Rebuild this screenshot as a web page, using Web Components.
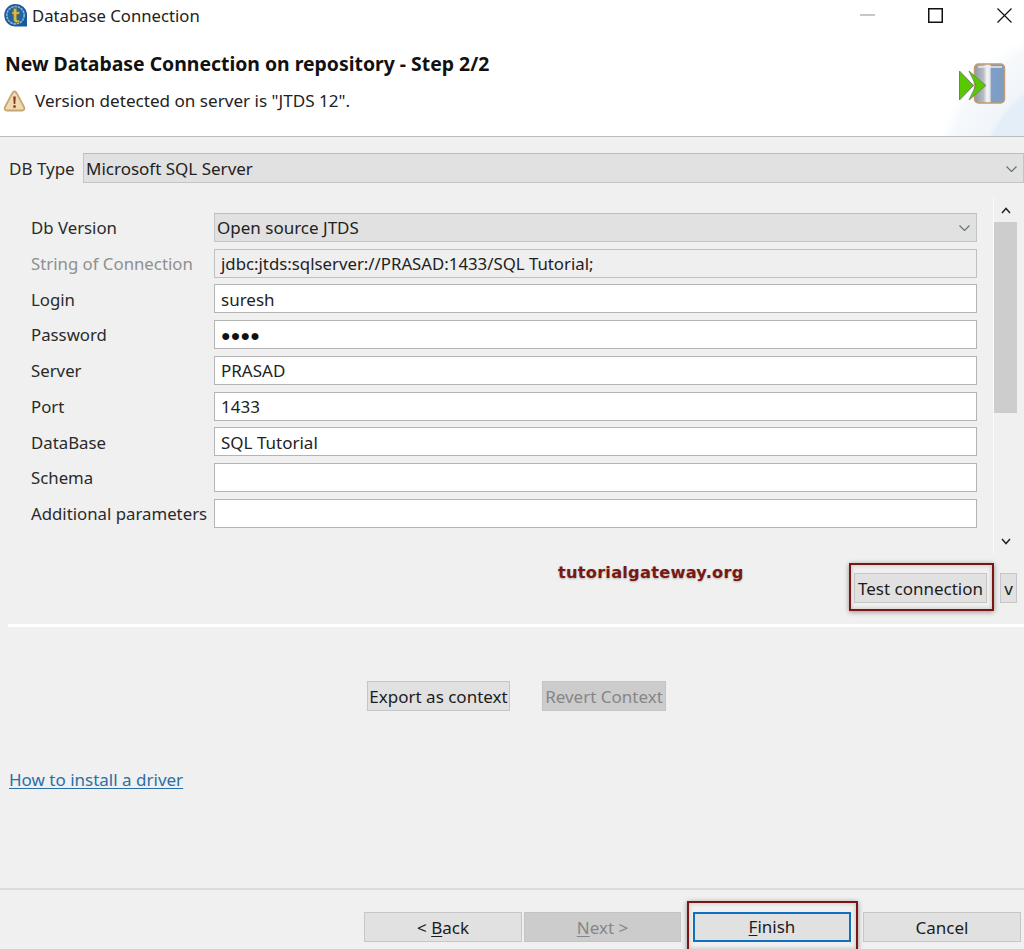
<!DOCTYPE html>
<html lang="en"><head><meta charset="utf-8"><title>Database Connection</title>
<style>
html,body{margin:0;padding:0;background:#f0f0f0}
body{font:17px/1.2 "Noto Sans","Open Sans",sans-serif;color:#1a1a1a;width:1024px;height:949px;overflow:hidden}
</style></head><body>
<x-dialog></x-dialog>
<script>
function el(name, css, html){
  customElements.define(name, class extends HTMLElement{
    constructor(){super();this.attachShadow({mode:'open'}).innerHTML='<style>'+css+'</style>'+html;}
  });
}
el('x-titlebar',`
:host{display:flex;align-items:center;height:32px;background:#fff;padding-left:4px;box-sizing:border-box;font-size:16.7px;color:#222}
svg{display:block}
.t{margin-left:4px;flex:1}
.c{display:flex;align-items:center}
.b{width:15px;height:24px;display:flex;align-items:center;justify-content:center;margin-top:-2px}
`,`<svg width="24" height="25" viewBox="0 0 24 25" style="margin-top:-2px"><path d="M11.500 1a11 11 0 1 0 0 22.500H23V12A11.200 11.200 0 0 0 11.500 1z" fill="#1a5a9c"/><circle cx="11.500" cy="12.200" r="8.700" fill="#1f659f" stroke="#8fb7d8" stroke-width="1.600" stroke-dasharray="2.500 .8"/><path d="M9.500 5.500h3.200v3.300h2.800v2.400h-2.800v5c0 1 .9 1.100 2.600.9v2.300c-3.500.6-5.800-.2-5.800-2.900v-5.300H8V8.800h1.500z" fill="#d9b94a" stroke="#7d6a25" stroke-width=".5"/></svg>
<span class="t">Database Connection</span>
<div class="c">
<div class="b" style="margin-right:53px"><svg width="15" height="2"><rect width="15" height="2" fill="#c8c8c8"/></svg></div>
<div class="b" style="margin-right:54px"><svg width="15" height="15"><rect x=".75" y=".75" width="13.500" height="13.500" fill="none" stroke="#111" stroke-width="1.500"/></svg></div>
<div class="b" style="margin-right:12px"><svg width="15" height="15"><path d="M.5.5l14 14M14.500.5l-14 14" stroke="#111" stroke-width="1.200" fill="none"/></svg></div>
</div>`);

el('x-banner',`
:host{display:block;position:relative;height:105px;box-sizing:border-box;border-bottom:1px solid #bdbdbd;background:radial-gradient(circle 156px at 1090px 148px,#e2ecf7 0,#e4eef8 68%,#f0f5fa 71%,#f6f9fc 92%,#fff 100%),#fff;padding-left:5px}
h1{margin:0;padding-top:19px;font-size:19.4px;line-height:26px;font-weight:700;color:#111}
.m{display:flex;align-items:center;margin-top:12px;font-size:17.100px;color:#222;margin-left:-2px}
.m span{margin-left:9px;padding-top:1px}
.i{position:absolute;left:958px;top:30px}
`,`<h1>New Database Connection on repository - Step 2/2</h1>
<div class="m"><svg width="23" height="24" viewBox="0 0 23 24"><path d="M11.500 2.500c-1 0-1.700.8-2.300 1.900L2 18c-1 2 0 3.500 2 3.500h15c2 0 3-1.500 2-3.500L13.800 4.400c-.6-1.100-1.300-1.900-2.300-1.900z" fill="#eedbb0" stroke="#c8a672" stroke-width="1.800"/><path d="M10.200 7.500h2.600l-.5 7.500h-1.600zM10.300 16.300h2.400v2.400h-2.400z" fill="#8c3a22"/></svg><span>Version detected on server is "JTDS 12".</span></div>
<svg class="i" width="48" height="44" viewBox="0 0 48 44"><defs><linearGradient id="g" x1="0" x2="1"><stop offset="0" stop-color="#8f979f"/><stop offset=".3" stop-color="#b8bdc2"/><stop offset=".42" stop-color="#f6f6f6"/><stop offset=".52" stop-color="#dfe3e7"/><stop offset=".56" stop-color="#7f9fc6"/><stop offset="1" stop-color="#7d9cc2"/></linearGradient></defs><rect x="16.500" y="2" width="30" height="39" rx="4" fill="url(#g)" stroke="#c09a70" stroke-width="1.500"/><path d="M20 5h24" stroke="#e6edf4" stroke-width="1.500"/><path d="M1.500 9l14 14.500L1.500 38z" fill="#58c800" stroke="#6f7f68"/><path d="M11 9l17 14.500L11 38l7-14.500z" fill="#58c800" stroke="#6f7f68" stroke-width=".8"/></svg>`);

el('x-combo',`
:host{display:flex;align-items:center;box-sizing:border-box;background:#e1e1e1;border:1px solid #c4c4c4;border-top-color:#bcbcbc;padding:2px 6px 0 2px;color:#222;height:100%}
span{flex:1}
`,`<span><slot></slot></span><svg width="11" height="6" viewBox="0 0 11 6"><path d="M.5.5l5 5 5-5" fill="none" stroke="#5f6f6f" stroke-width="1.100"/></svg>`);

el('x-input',`
:host{display:flex;align-items:center;box-sizing:border-box;background:#fff;border:1px solid #b4b4b4;padding:2px 6px 0;color:#222;height:100%;min-width:0}
:host([disabled]){background:#efefef;border-color:#c0c0c0;font-size:16.800px}
:host([secret]){font-size:16.200px;color:#111}
`,`<slot></slot>`);

el('x-row',`
:host{display:grid;grid-template-columns:183px 1fr;align-items:center;height:29px}
.l{white-space:nowrap;color:#2a2a2a;padding-top:2px;font-size:16.800px}
:host([disabled]) .l{color:#8f8f8f}
`,`<span class="l"><slot name="label"></slot></span><slot></slot>`);

el('x-scrollbar',`
:host{display:flex;flex-direction:column;width:24px;background:#f0f0f0;border-left:1px solid #fafafa;box-sizing:border-box}
.a{height:24px;display:flex;align-items:center;justify-content:center}
.tr{flex:1;display:flex;flex-direction:column}
.th{height:191px;background:#cdcdcd}
`,`<div class="a"><svg width="10" height="7" viewBox="0 0 10 7"><path d="M1 6l4-4.500L9 6" fill="none" stroke="#223" stroke-width="1.500"/></svg></div>
<div class="tr"><div class="th"></div></div>
<div class="a"><svg width="10" height="7" viewBox="0 0 10 7"><path d="M1 1l4 4.500L9 1" fill="none" stroke="#223" stroke-width="1.500"/></svg></div>`);

el('x-btn',`
:host{display:inline-flex;align-items:center;justify-content:center;box-sizing:border-box;background:#e1e1e1;border:1px solid #c6c6c6;padding-top:2px;height:30px;color:#1c1c1c;white-space:nowrap;position:relative}
:host([disabled]){background:#cccccc;border-color:#c4c4c4;color:#868686}
:host([focus]){border:2px solid #0f70c0;padding-top:1px}
`,`<slot></slot>`);

el('x-mark',`
:host{display:inline-flex;position:relative}
:host::after{content:"";position:absolute;pointer-events:none;inset:var(--inset);border:2px solid #7a1712;box-shadow:0 1px 5px rgba(0,0,0,.4),inset 0 0 4px rgba(0,0,0,.22)}
`,`<slot></slot>`);

el('x-dialog',`
:host{display:flex;flex-direction:column;height:949px;background:#f0f0f0;overflow:hidden}
.db{display:flex;align-items:stretch;height:30px;margin-top:16px;padding-left:9px}
.db .l{width:74px;align-self:center;color:#2a2a2a;padding-top:2px}
.db x-combo{flex:1}
.panel{display:flex;height:355px;margin-top:15px;padding-right:7px}
.form{width:993px;box-sizing:border-box;padding:14.750px 16px 0 31px;display:grid;grid-auto-rows:29px;row-gap:6.750px;align-content:start}
.test{display:flex;height:71px;box-sizing:border-box;padding:20px 7px 0 558px;align-items:flex-start}
.wm{font:700 16.300px/1 "DejaVu Sans",sans-serif;color:#7a1712;letter-spacing:.2px;margin-top:-8px;text-shadow:0 1px 2px rgba(0,0,0,.25);flex:1}
.line{height:3px;background:#fff;margin-left:8px;flex:none}
.ctx{display:flex;gap:32px;padding:54px 0 0 367px}
.link{margin:57px 0 0 9px;color:#2a6fa8;text-decoration:underline;line-height:24px;text-underline-offset:2px}
.sp{flex:1}
.sep{height:2px;background:#dcdcdc;flex:none}
.foot{display:flex;height:59px;box-sizing:border-box;padding:22px 0 0 364px;align-items:flex-start}
.foot x-btn{width:158px}
u{text-underline-offset:2px}
`,`<x-titlebar></x-titlebar><x-banner></x-banner>
<div class="db"><span class="l">DB Type</span><x-combo>Microsoft SQL Server</x-combo></div>
<div class="panel"><div class="form">
<x-row><span slot="label">Db Version</span><x-combo>Open source JTDS</x-combo></x-row>
<x-row disabled><span slot="label">String of Connection</span><x-input disabled>jdbc:jtds:sqlserver://PRASAD:1433/SQL Tutorial;</x-input></x-row>
<x-row><span slot="label">Login</span><x-input>suresh</x-input></x-row>
<x-row><span slot="label">Password</span><x-input secret>●●●●</x-input></x-row>
<x-row><span slot="label">Server</span><x-input>PRASAD</x-input></x-row>
<x-row><span slot="label">Port</span><x-input>1433</x-input></x-row>
<x-row><span slot="label">DataBase</span><x-input>SQL Tutorial</x-input></x-row>
<x-row><span slot="label">Schema</span><x-input></x-input></x-row>
<x-row><span slot="label">Additional parameters</span><x-input></x-input></x-row>
</div><x-scrollbar></x-scrollbar></div>
<div class="test"><span class="wm">tutorialgateway.org</span>
<x-mark style="--inset:-10px -7px -8px -5px"><x-btn style="width:133px">Test connection</x-btn></x-mark>
<x-btn style="width:17px;margin-left:13px">v</x-btn></div>
<div class="line"></div>
<div class="ctx"><x-btn style="width:143px">Export as context</x-btn><x-btn disabled style="width:124px">Revert Context</x-btn></div>
<div class="link">How to install a driver</div>
<div class="sp"></div><div class="sep"></div>
<div class="foot">
<x-btn><span>&lt; <u>B</u>ack</span></x-btn>
<x-btn disabled style="margin-left:2px;width:157px"><span><u>N</u>ext &gt;</span></x-btn>
<x-mark style="--inset:-11px -7px -9px -6px;margin-left:12px"><x-btn focus><span><u>F</u>inish</span></x-btn></x-mark>
<x-btn style="margin-left:12px"><span>Cancel</span></x-btn>
</div>`);
</script>
</body></html>
